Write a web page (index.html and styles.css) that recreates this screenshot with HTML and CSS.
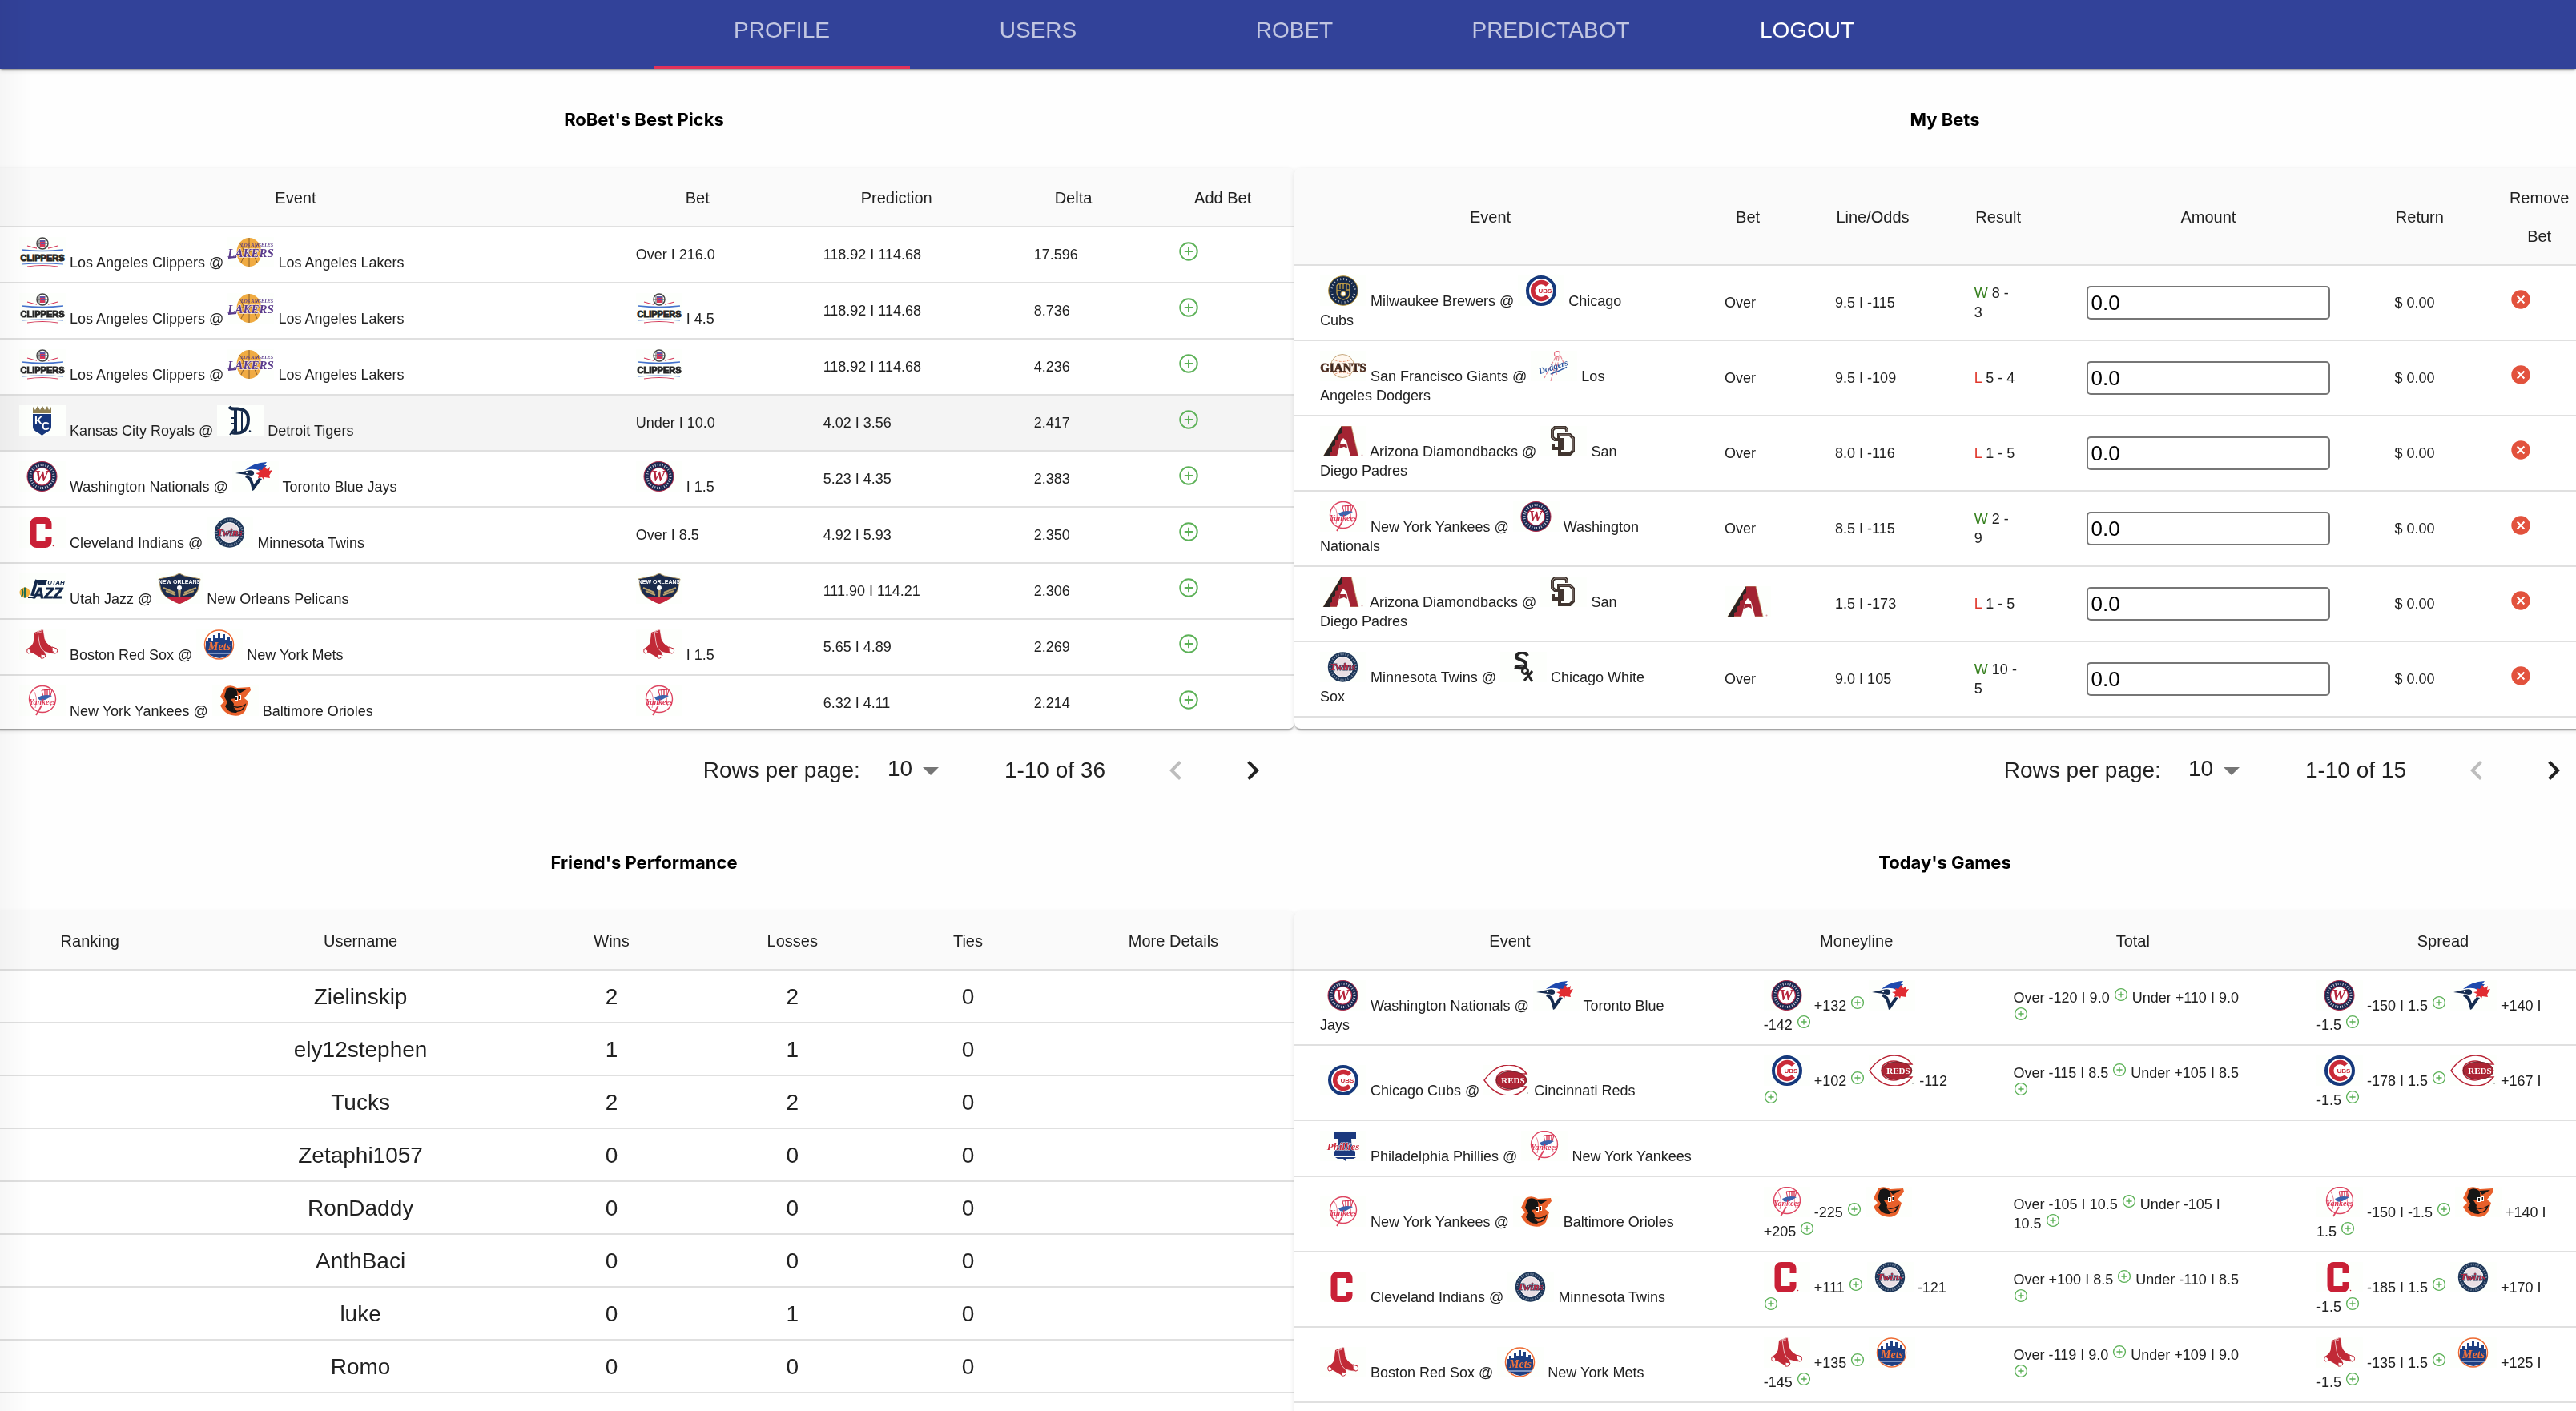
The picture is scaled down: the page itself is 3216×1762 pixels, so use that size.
FILE: index.html
```html
<!DOCTYPE html>
<html lang="en">
<head>
<meta charset="utf-8">
<meta name="viewport" content="width=device-width, initial-scale=1">
<title>RoBet</title>
<link rel="stylesheet" href="styles.css">
</head>
<body>
<svg class="sprite" aria-hidden="true">
  <symbol id="plus" viewBox="0 0 16 16"><circle cx="8" cy="8" r="6.6" fill="none" stroke="#5cb157" stroke-width="1.2"/><path d="M8 4.8v6.4M4.8 8h6.4" stroke="#5cb157" stroke-width="1.2"/></symbol>
  <symbol id="cross" viewBox="0 0 16 16"><circle cx="8" cy="8" r="7.2" fill="#e2523d"/><path d="M5.3 5.2l5.4 5.6M10.7 5.2l-5.4 5.6" stroke="#fff" stroke-width="1.3"/></symbol>
  <symbol id="prev" viewBox="0 0 24 24"><path d="M15.41 16.59L10.83 12l4.58-4.59L14 6l-6 6 6 6z"/></symbol>
  <symbol id="next" viewBox="0 0 24 24"><path d="M8.59 16.59L13.17 12 8.59 7.41 10 6l6 6-6 6z"/></symbol>
  <symbol id="caret" viewBox="0 0 24 24"><path d="M7 10l5 5 5-5z"/></symbol>

  <symbol id="clippers" viewBox="0 0 58 38">
    <circle cx="29" cy="8" r="7" fill="#fff" stroke="#444" stroke-width="1.5"/><path d="M22 8h14M25 2v12M33 2v12" stroke="#555" stroke-width="1"/><rect x="26" y="4" width="6" height="8" fill="#d5385a"/><path d="M26 5h6M27 8h5" stroke="#3a5fc0" stroke-width="1.5"/>
    <path d="M10 11q10 3 12 3M48 11q-10 3-12 3" stroke="#d5385a" stroke-width="1.3" fill="none"/><path d="M3 16q26 3 52 0" stroke="#4472cc" stroke-width="1.3" fill="none"/>
    <text x="29" y="30" class="mark narrow" font-size="11" fill="#262626" stroke="#262626" stroke-width="1" text-anchor="middle">CLIPPERS</text>
    <path d="M3 34q26-2 52 0" stroke="#4472cc" stroke-width="1.2" fill="none"/><path d="M10 37q19-3 38 0" stroke="#d5385a" stroke-width="1.2" fill="none"/>
  </symbol>
  <symbol id="lakers" viewBox="0 0 58 38">
    <ellipse cx="27" cy="19" rx="15.5" ry="18" fill="#f0ab42"/><path d="M27 1v36M15 7q10 12 2 25M39 7q-10 12-2 25M12 18h31" stroke="#6b4a28" stroke-width=".8" fill="none"/>
    <text x="37" y="12" class="mark serif" font-size="6" fill="#5a3b8c" text-anchor="middle">LOS ANGELES</text>
    <text x="29" y="25" class="mark serif" font-size="15" fill="#5a3b8c" stroke="#fff" stroke-width="1" paint-order="stroke" text-anchor="middle">LAKERS</text>
    <path d="M1 26l10-1" stroke="#5a3b8c" stroke-width="2"/>
  </symbol>
  <symbol id="royals" viewBox="0 0 58 38">
    <path d="M17 10V2l3 4 3-5 3 5 3-5 3 5 3-5 2 5 3-4v8z" fill="#8f8052"/><path d="M17 11h23v16c0 6-8 7-11.500 11C25 34 17 33 17 27z" fill="#17377c"/>
    <text x="24" y="24" class="mark upright" font-size="14" fill="#fff" text-anchor="middle">K</text><text x="33" y="31" class="mark upright" font-size="14" fill="#fff" text-anchor="middle">C</text>
  </symbol>
  <symbol id="tigers" viewBox="0 0 58 38">
    <g fill="none" stroke="#152a4a" stroke-width="4"><path d="M15 2c4 5 9 1 14 3q10 2 10 13t-7 15q-5 3-14 1"/><path d="M23 6v27" stroke-width="4"/><path d="M31 8v24" stroke-width="2"/><path d="M17 16h8M17 23h8M16 37l5-7M40 32l2 1" stroke-width="2"/></g>
  </symbol>
  <symbol id="nationals" viewBox="0 0 58 38">
    <circle cx="28.500" cy="19" r="18.500" fill="#1c2850" stroke="#ac2443" stroke-width="1"/><circle cx="28.500" cy="19" r="14.500" fill="none" stroke="#c9cddb" stroke-width="3" stroke-dasharray="1 2"/><circle cx="28.500" cy="19" r="11" fill="#fff" stroke="#ac2443" stroke-width="1.200"/>
    <text x="28" y="25" class="mark serif" font-size="19" fill="#b5243c" text-anchor="middle">W</text>
  </symbol>
  <symbol id="bluejays" viewBox="0 0 58 38">
    <path d="M5 15l17-3 12-3q6 3 8 9L25 37l-4-17z" fill="#fff"/><path d="M16 11Q26 2 43 1l-3 4h3l-3 4 3 1-9 2q-6-4-18-1z" fill="#1d49ad"/><path d="M4 15l14-3q8-2 9 2t-4 4l-5-1z" fill="#152c50"/><path d="M16 20q5 2 7 9l2 8 2-1 10-14-4-1-6 8-3-8-6-4z" fill="#152c50"/><circle cx="18" cy="14" r="1.200" fill="#fff"/>
    <path d="M40 6l3 4 4-3-1 5 4-1-4 7 1 3-7-1-1 3-2-3-5 1 1-4-4-2 5-1-1-4 4 1z" fill="#e12c31"/>
  </symbol>
  <symbol id="indians" viewBox="0 0 58 38">
    <rect x="17.500" y="4" width="19" height="30" rx="4" fill="none" stroke="#c92036" stroke-width="8"/><rect x="32" y="14" width="9" height="11" fill="#fdfffc"/><circle cx="42.500" cy="35.500" r=".8" fill="#c92036"/>
  </symbol>
  <symbol id="twins" viewBox="0 0 58 38">
    <circle cx="28.500" cy="19" r="18.700" fill="#1d3658"/><circle cx="28.500" cy="19" r="16" fill="none" stroke="#8494aa" stroke-width="2.500" stroke-dasharray="1 2"/><circle cx="28.500" cy="19" r="12.500" fill="#e9dfe4" stroke="#fff" stroke-width="1"/>
    <text x="28.500" y="23" class="mark serif" font-size="13" fill="#bf2943" stroke="#1d3658" stroke-width="1" paint-order="stroke" text-anchor="middle">Twins</text>
  </symbol>
  <symbol id="jazz" viewBox="0 0 58 38">
    <text x="46" y="14" class="mark sans" font-size="8" fill="#13284a" text-anchor="middle">UTAH</text><path d="M21 8h14l-2 6h-9z" fill="#13284a"/><path d="M22 8l-6 20" stroke="#13284a" stroke-width="4"/><circle cx="7" cy="24" r="6.500" fill="#f2b13c"/><path d="M7 17.500v13M3 19q3 5 0 10" stroke="#1f6e51" stroke-width="2" fill="none"/><path d="M11 30h8" stroke="#13284a" stroke-width="2"/>
    <text x="36" y="31" class="mark sans" font-size="19" fill="#13284a" stroke="#13284a" stroke-width=".8" text-anchor="middle">AZZ</text>
  </symbol>
  <symbol id="pelicans" viewBox="0 0 58 38">
    <path d="M3 7l20-4 6-3 6 3 20 4-3 14q-4 9-13 12l-10 5-10-5Q10 30 6 21z" fill="#1b2b4d" stroke="#b39a66" stroke-width="1"/><path d="M9 18l14 6M12 22l12 5M50 18l-15 6M47 22l-13 5" stroke="#b9a06c" stroke-width="2"/><path d="M14 30h30q-6 5-15 8-9-3-15-8z" fill="#c4243f"/>
    <text x="29" y="13" class="mark narrow" font-size="7" fill="#fff" text-anchor="middle">NEW ORLEANS</text><circle cx="29" cy="18" r="4" fill="#fff" stroke="#1b2b4d" stroke-width="2"/><path d="M27 21h4l-1 9h-2z" fill="#b9a06c"/>
  </symbol>
  <symbol id="redsox" viewBox="0 0 58 38">
    <path d="M19 4l10-4-1 14q-1 6 3 13l2 5-5 4-12-7-5-1q-3-4 1-5 6-4 6-10z" fill="#c12a37"/><path d="M23 3l7-3 2 12q2 6 8 9l7 3-1 6q-7 1-14-2-6-4-7-12z" fill="#c12a37" stroke="#fff" stroke-width=".7"/>
    <path d="M10 25q4-2 5 4l-4 1q-2-2-1-5zM27 31l6 1q-1 5-6 4zM41 22l6 2q2 6-3 6-4-3-3-8z" fill="#fff" stroke="#c12a37" stroke-width="1"/><path d="M20 5l8-2" stroke="#e9a3aa" stroke-width="1"/>
  </symbol>
  <symbol id="mets" viewBox="0 0 58 38">
    <circle cx="28.500" cy="19" r="18" fill="#fff" stroke="#ee6a32" stroke-width="1.500"/><path d="M12 20v-5h3v-4h3v3h3V7h3v4h3V4h3v7h3V6h3v7h3v-3h3v5h3v5q2 13-16 16Q9 32 12 20z" fill="#1f3f82"/><path d="M14 30h29" stroke="#9fb2d6" stroke-width="1.500"/>
    <text x="29" y="26" class="mark serif" font-size="14" fill="#f3733b" stroke="#1f3f82" stroke-width="1" paint-order="stroke" text-anchor="middle">Mets</text>
  </symbol>
  <symbol id="yankees" viewBox="0 0 58 38">
    <circle cx="29" cy="17" r="16.500" fill="#fff" stroke="#dd4561" stroke-width="1.400"/><path d="M17 5q7 9 3 23M41 6q-5 9-1 20" fill="none" stroke="#e88496" stroke-width="1"/><path d="M28 6l13-1-2 8-9 1z" fill="#fff" stroke="#d52d4c" stroke-width="1"/><path d="M32 5v8M35 5v8M38 5v8" stroke="#d52d4c" stroke-width="1.300"/><path d="M23 15q8-5 18-2l-5 3q-6 4-11 2z" fill="#3b63ae"/>
    <text x="29" y="24" class="mark serif" font-size="10" fill="#dd3453" text-anchor="middle">Yankees</text><path d="M28 25l-7 12" stroke="#dd4561" stroke-width="1.800"/>
  </symbol>
  <symbol id="orioles" viewBox="0 0 58 38">
    <path d="M16 2q7-4 15 1l16-1 1 4-8 10 5 4-4 12q-6 8-17 5-9-2-14-12l5-5-5-6z" fill="#e8602b"/><path d="M18 4q6-4 12 1 3 6 0 11l-7 1 4 6-1 5q2 4 7 3l-3 3q-9 1-14-8l3-5-4-7z" fill="#161616"/><path d="M30 5l14-1-10 6z" fill="#161616"/><path d="M28 13h4v6h-4zM33 12h3v6h-3z" fill="#fff"/><path d="M29 14h2v4h-2zM33.500 13h1.500v4h-1.500z" fill="#161616"/><path d="M24 25q8 5 17-1-3 9-11 8z" fill="#e8602b" stroke="#161616" stroke-width="1.400"/>
  </symbol>
  <symbol id="brewers" viewBox="0 0 58 38">
    <circle cx="29" cy="19" r="18.300" fill="#16294a" stroke="#b99537" stroke-width="1"/><circle cx="29" cy="19" r="14.500" fill="none" stroke="#c5cbd6" stroke-width="2.500" stroke-dasharray="1 3"/><path d="M21 22v-9q1-3 4-2 2-2 4 0 2-2 4 0 4-1 4 3v8q0 7-8 8-7-1-8-8zM25 11v6M29 11v6M33 11v6M21 19h5M32 18h5" fill="#16294a" stroke="#c6a146" stroke-width="1.300"/><circle cx="29" cy="23" r="3" fill="#fff" stroke="#c6a146"/>
  </symbol>
  <symbol id="cubs" viewBox="0 0 58 38">
    <circle cx="29" cy="19" r="17" fill="#fff" stroke="#16397c" stroke-width="4"/><path d="M37 12a10.500 10.500 0 1 0 0 14" fill="none" stroke="#ca2a38" stroke-width="5.500"/><text x="34" y="22" class="mark sans upright" font-size="8" fill="#ca2a38" text-anchor="middle" stroke="#fff" stroke-width="1" paint-order="stroke">UBS</text>
  </symbol>
  <symbol id="giants" viewBox="0 0 58 38">
    <circle cx="28" cy="19" r="14.500" fill="#fff8ef" stroke="#c5a57a" stroke-width="1"/><path d="M17 11q10 5 22 0M17 30q11-6 22 0" stroke="#e27b52" stroke-width="1" stroke-dasharray="1.500 1" fill="none"/>
    <text x="29" y="26" class="mark serif upright" font-size="15" fill="#332621" stroke="#5a3423" stroke-width=".8" text-anchor="middle">GIANTS</text>
  </symbol>
  <symbol id="dodgers" viewBox="0 0 58 38">
    <circle cx="33" cy="4" r="3.500" fill="#fff" stroke="#e57080" stroke-width="1.200"/><path d="M31 8L17 34M33 8l-8 30M35 8l-3 22M37 6l5 11" stroke="#e88a97" stroke-width="1.200" stroke-dasharray="5 1.500"/>
    <g transform="rotate(-18 27 20)"><text x="28" y="24" class="mark serif" font-size="11" fill="#2c55a0" text-anchor="middle">Dodgers</text><path d="M22 28q10 0 22-2" stroke="#2c55a0" stroke-width="1.500" fill="none"/></g>
  </symbol>
  <symbol id="dbacks" viewBox="0 0 58 38">
    <path d="M4 38L27 0h12l9 38z" fill="#a32433" stroke="#c6a878" stroke-width=".8"/><path d="M4 38L27 0v9l-4 2v6l-4 1v6l-4 2v6l-3 1v5z" fill="#2a2523"/><path d="M21 38l5-19 3-4 4 4 5 19z" fill="#fdfffc"/><path d="M25 22h8l1 6-4-2-6 2z" fill="#a32433"/><circle cx="52.500" cy="36.500" r="1" fill="#d59aa0"/>
  </symbol>
  <symbol id="padres" viewBox="0 0 58 38">
    <g fill="none" stroke="#41352f" stroke-width="4"><path d="M33 8V4l-2-2H18l-3 3v9l3 3h9v11H16v-6"/><path d="M24 18v17h13l4-4V15l-4-4H23v4"/></g><path d="M33 8V4l-2-2H18l-3 3v9l3 3M41 31V15l-4-4H23" fill="none" stroke="#a59b95" stroke-width=".8"/>
  </symbol>
  <symbol id="whitesox" viewBox="0 0 58 38">
    <g fill="none" stroke="#242424"><path d="M34 5q-2-5-9-4-6 2-4 7l9 4q5 5-1 8-5 1-11-1" stroke-width="4"/><path d="M18 19q6-3 12-2" stroke-width="2"/><circle cx="31" cy="24" r="3.500" stroke-width="3"/><path d="M32 25l8 12M40 24l-10 12" stroke-width="3"/></g>
  </symbol>
  <symbol id="phillies" viewBox="0 0 58 38">
    <path d="M17 1h28v9h-6q0 12 5 16v6H18v-6q6-5 5-16h-6z" fill="#1b397e"/><path d="M19 33h26l-3 2h-9l-1 3-3-3h-7z" fill="#1b397e"/><text x="29" y="24" class="mark serif" font-size="13" fill="#cb2d3d" stroke="#fff" stroke-width=".8" paint-order="stroke" text-anchor="middle">Phillies</text>
  </symbol>
  <symbol id="reds" viewBox="0 0 58 38">
    <path d="M1 19Q14 0 32 0q14 0 22 11H43q-9-6-18-3-9 3-9 11t9 11q9 3 18-3h11q-8 11-22 11Q14 38 1 19z" fill="#fff" stroke="#b92537" stroke-width="1.400"/><ellipse cx="35" cy="19" rx="19" ry="11" fill="#ad2434" stroke="#5d2229" stroke-width=".8"/>
    <text x="37" y="23" class="mark serif upright" font-size="11" fill="#fff" text-anchor="middle">REDS</text><circle cx="55" cy="35" r=".8" fill="#777"/>
  </symbol>
</svg>

<div class="app">
  <header class="appbar">
    <nav class="tabs">
      <a class="tab active" href="#profile">PROFILE</a>
      <a class="tab" href="#users">USERS</a>
      <a class="tab" href="#robet">ROBET</a>
      <a class="tab" href="#predictabot">PREDICTABOT</a>
      <a class="tab logout" href="#logout">LOGOUT</a>
    </nav>
  </header>

  <main class="dashboard">
    <section class="panel">
      <h2 class="title">RoBet's Best Picks</h2>
      <div class="paper">
        <table class="picks">
          <colgroup><col class="c-event"><col class="c-bet"><col class="c-pred"><col class="c-delta"><col class="c-add"></colgroup>
          <thead><tr><th>Event</th><th>Bet</th><th>Prediction</th><th>Delta</th><th>Add Bet</th></tr></thead>
          <tbody>
            <tr><td><svg class="logo"><use href="#clippers"/></svg> Los Angeles Clippers @ <svg class="logo"><use href="#lakers"/></svg> Los Angeles Lakers</td><td>Over I 216.0</td><td>118.92 I 114.68</td><td>17.596</td><td><button class="act" aria-label="Add bet"><svg><use href="#plus"/></svg></button></td></tr>
            <tr><td><svg class="logo"><use href="#clippers"/></svg> Los Angeles Clippers @ <svg class="logo"><use href="#lakers"/></svg> Los Angeles Lakers</td><td><svg class="logo"><use href="#clippers"/></svg> I 4.5</td><td>118.92 I 114.68</td><td>8.736</td><td><button class="act" aria-label="Add bet"><svg><use href="#plus"/></svg></button></td></tr>
            <tr><td><svg class="logo"><use href="#clippers"/></svg> Los Angeles Clippers @ <svg class="logo"><use href="#lakers"/></svg> Los Angeles Lakers</td><td><svg class="logo"><use href="#clippers"/></svg></td><td>118.92 I 114.68</td><td>4.236</td><td><button class="act" aria-label="Add bet"><svg><use href="#plus"/></svg></button></td></tr>
            <tr class="hovered"><td><svg class="logo"><use href="#royals"/></svg> Kansas City Royals @ <svg class="logo"><use href="#tigers"/></svg> Detroit Tigers</td><td>Under I 10.0</td><td>4.02 I 3.56</td><td>2.417</td><td><button class="act" aria-label="Add bet"><svg><use href="#plus"/></svg></button></td></tr>
            <tr><td><svg class="logo"><use href="#nationals"/></svg> Washington Nationals @ <svg class="logo"><use href="#bluejays"/></svg> Toronto Blue Jays</td><td><svg class="logo"><use href="#nationals"/></svg> I 1.5</td><td>5.23 I 4.35</td><td>2.383</td><td><button class="act" aria-label="Add bet"><svg><use href="#plus"/></svg></button></td></tr>
            <tr><td><svg class="logo"><use href="#indians"/></svg> Cleveland Indians @ <svg class="logo"><use href="#twins"/></svg> Minnesota Twins</td><td>Over I 8.5</td><td>4.92 I 5.93</td><td>2.350</td><td><button class="act" aria-label="Add bet"><svg><use href="#plus"/></svg></button></td></tr>
            <tr><td><svg class="logo"><use href="#jazz"/></svg> Utah Jazz @ <svg class="logo"><use href="#pelicans"/></svg> New Orleans Pelicans</td><td><svg class="logo"><use href="#pelicans"/></svg></td><td>111.90 I 114.21</td><td>2.306</td><td><button class="act" aria-label="Add bet"><svg><use href="#plus"/></svg></button></td></tr>
            <tr><td><svg class="logo"><use href="#redsox"/></svg> Boston Red Sox @ <svg class="logo"><use href="#mets"/></svg> New York Mets</td><td><svg class="logo"><use href="#redsox"/></svg> I 1.5</td><td>5.65 I 4.89</td><td>2.269</td><td><button class="act" aria-label="Add bet"><svg><use href="#plus"/></svg></button></td></tr>
            <tr><td><svg class="logo"><use href="#yankees"/></svg> New York Yankees @ <svg class="logo"><use href="#orioles"/></svg> Baltimore Orioles</td><td><svg class="logo"><use href="#yankees"/></svg></td><td>6.32 I 4.11</td><td>2.214</td><td><button class="act" aria-label="Add bet"><svg><use href="#plus"/></svg></button></td></tr>
          </tbody>
        </table>
      </div>
      <div class="pager">
        <label for="picks-rows">Rows per page:</label>
        <span class="rows"><select id="picks-rows"><option>10</option><option>25</option></select><svg><use href="#caret"/></svg></span>
        <span>1-10 of 36</span>
        <div class="pager-nav"><button class="step" aria-label="Previous page" disabled><svg><use href="#prev"/></svg></button><button class="step" aria-label="Next page"><svg><use href="#next"/></svg></button></div>
      </div>
    </section>

    <section class="panel">
      <h2 class="title">My Bets</h2>
      <div class="paper">
        <table class="bets">
          <colgroup><col class="c-event"><col class="c-bet"><col class="c-line"><col class="c-result"><col class="c-amount"><col class="c-return"><col class="c-remove"></colgroup>
          <thead><tr><th>Event</th><th>Bet</th><th>Line/Odds</th><th>Result</th><th>Amount</th><th>Return</th><th>Remove Bet</th></tr></thead>
          <tbody>
            <tr><td><svg class="logo"><use href="#brewers"/></svg> Milwaukee Brewers @ <svg class="logo"><use href="#cubs"/></svg> Chicago<br>Cubs</td><td>Over</td><td>9.5 I -115</td><td><span class="win">W</span> 8 -<br>3</td><td><input type="text" value="0.0" aria-label="Amount"></td><td>$ 0.00</td><td><button class="act" aria-label="Remove bet"><svg><use href="#cross"/></svg></button></td></tr>
            <tr><td><svg class="logo"><use href="#giants"/></svg> San Francisco Giants @ <svg class="logo"><use href="#dodgers"/></svg> Los<br>Angeles Dodgers</td><td>Over</td><td>9.5 I -109</td><td><span class="loss">L</span> 5 - 4</td><td><input type="text" value="0.0" aria-label="Amount"></td><td>$ 0.00</td><td><button class="act" aria-label="Remove bet"><svg><use href="#cross"/></svg></button></td></tr>
            <tr><td><svg class="logo"><use href="#dbacks"/></svg> Arizona Diamondbacks @ <svg class="logo"><use href="#padres"/></svg> San<br>Diego Padres</td><td>Over</td><td>8.0 I -116</td><td><span class="loss">L</span> 1 - 5</td><td><input type="text" value="0.0" aria-label="Amount"></td><td>$ 0.00</td><td><button class="act" aria-label="Remove bet"><svg><use href="#cross"/></svg></button></td></tr>
            <tr><td><svg class="logo"><use href="#yankees"/></svg> New York Yankees @ <svg class="logo"><use href="#nationals"/></svg> Washington<br>Nationals</td><td>Over</td><td>8.5 I -115</td><td><span class="win">W</span> 2 -<br>9</td><td><input type="text" value="0.0" aria-label="Amount"></td><td>$ 0.00</td><td><button class="act" aria-label="Remove bet"><svg><use href="#cross"/></svg></button></td></tr>
            <tr><td><svg class="logo"><use href="#dbacks"/></svg> Arizona Diamondbacks @ <svg class="logo"><use href="#padres"/></svg> San<br>Diego Padres</td><td><svg class="logo"><use href="#dbacks"/></svg></td><td>1.5 I -173</td><td><span class="loss">L</span> 1 - 5</td><td><input type="text" value="0.0" aria-label="Amount"></td><td>$ 0.00</td><td><button class="act" aria-label="Remove bet"><svg><use href="#cross"/></svg></button></td></tr>
            <tr><td><svg class="logo"><use href="#twins"/></svg> Minnesota Twins @ <svg class="logo"><use href="#whitesox"/></svg> Chicago White<br>Sox</td><td>Over</td><td>9.0 I 105</td><td><span class="win">W</span> 10 -<br>5</td><td><input type="text" value="0.0" aria-label="Amount"></td><td>$ 0.00</td><td><button class="act" aria-label="Remove bet"><svg><use href="#cross"/></svg></button></td></tr>
          </tbody>
        </table>
      </div>
      <div class="pager">
        <label for="bets-rows">Rows per page:</label>
        <span class="rows"><select id="bets-rows"><option>10</option><option>25</option></select><svg><use href="#caret"/></svg></span>
        <span>1-10 of 15</span>
        <div class="pager-nav"><button class="step" aria-label="Previous page" disabled><svg><use href="#prev"/></svg></button><button class="step" aria-label="Next page"><svg><use href="#next"/></svg></button></div>
      </div>
    </section>

    <section class="panel">
      <h2 class="title">Friend's Performance</h2>
      <div class="paper">
        <table class="friends">
          <colgroup><col class="c-rank"><col class="c-user"><col class="c-wins"><col class="c-losses"><col class="c-ties"><col class="c-more"></colgroup>
          <thead><tr><th>Ranking</th><th>Username</th><th>Wins</th><th>Losses</th><th>Ties</th><th>More Details</th></tr></thead>
          <tbody>
            <tr><td></td><td>Zielinskip</td><td>2</td><td>2</td><td>0</td><td></td></tr>
            <tr><td></td><td>ely12stephen</td><td>1</td><td>1</td><td>0</td><td></td></tr>
            <tr><td></td><td>Tucks</td><td>2</td><td>2</td><td>0</td><td></td></tr>
            <tr><td></td><td>Zetaphi1057</td><td>0</td><td>0</td><td>0</td><td></td></tr>
            <tr><td></td><td>RonDaddy</td><td>0</td><td>0</td><td>0</td><td></td></tr>
            <tr><td></td><td>AnthBaci</td><td>0</td><td>0</td><td>0</td><td></td></tr>
            <tr><td></td><td>luke</td><td>0</td><td>1</td><td>0</td><td></td></tr>
            <tr><td></td><td>Romo</td><td>0</td><td>0</td><td>0</td><td></td></tr>
          </tbody>
        </table>
      </div>
    </section>

    <section class="panel">
      <h2 class="title">Today's Games</h2>
      <div class="paper">
        <table class="games">
          <colgroup><col class="c-event"><col class="c-money"><col class="c-total"><col class="c-spread"></colgroup>
          <thead><tr><th>Event</th><th>Moneyline</th><th>Total</th><th>Spread</th></tr></thead>
          <tbody>
            <tr>
              <td><svg class="logo"><use href="#nationals"/></svg> Washington Nationals @ <svg class="logo"><use href="#bluejays"/></svg> Toronto Blue<br>Jays</td>
              <td><svg class="logo"><use href="#nationals"/></svg> +132 <button class="add" aria-label="Add"><svg><use href="#plus"/></svg></button> <svg class="logo"><use href="#bluejays"/></svg><br>-142 <button class="add" aria-label="Add"><svg><use href="#plus"/></svg></button></td>
              <td>Over -120 I 9.0 <button class="add" aria-label="Add"><svg><use href="#plus"/></svg></button> Under +110 I 9.0<br><button class="add" aria-label="Add"><svg><use href="#plus"/></svg></button></td>
              <td><svg class="logo"><use href="#nationals"/></svg> -150 I 1.5 <button class="add" aria-label="Add"><svg><use href="#plus"/></svg></button> <svg class="logo"><use href="#bluejays"/></svg> +140 I<br>-1.5 <button class="add" aria-label="Add"><svg><use href="#plus"/></svg></button></td>
            </tr>
            <tr>
              <td><svg class="logo"><use href="#cubs"/></svg> Chicago Cubs @ <svg class="logo"><use href="#reds"/></svg> Cincinnati Reds</td>
              <td><svg class="logo"><use href="#cubs"/></svg> +102 <button class="add" aria-label="Add"><svg><use href="#plus"/></svg></button> <svg class="logo"><use href="#reds"/></svg> -112<br><button class="add" aria-label="Add"><svg><use href="#plus"/></svg></button></td>
              <td>Over -115 I 8.5 <button class="add" aria-label="Add"><svg><use href="#plus"/></svg></button> Under +105 I 8.5<br><button class="add" aria-label="Add"><svg><use href="#plus"/></svg></button></td>
              <td><svg class="logo"><use href="#cubs"/></svg> -178 I 1.5 <button class="add" aria-label="Add"><svg><use href="#plus"/></svg></button> <svg class="logo"><use href="#reds"/></svg> +167 I<br>-1.5 <button class="add" aria-label="Add"><svg><use href="#plus"/></svg></button></td>
            </tr>
            <tr>
              <td><svg class="logo"><use href="#phillies"/></svg> Philadelphia Phillies @ <svg class="logo"><use href="#yankees"/></svg> New York Yankees</td>
              <td></td><td></td><td></td>
            </tr>
            <tr>
              <td><svg class="logo"><use href="#yankees"/></svg> New York Yankees @ <svg class="logo"><use href="#orioles"/></svg> Baltimore Orioles</td>
              <td><svg class="logo"><use href="#yankees"/></svg> -225 <button class="add" aria-label="Add"><svg><use href="#plus"/></svg></button> <svg class="logo"><use href="#orioles"/></svg><br>+205 <button class="add" aria-label="Add"><svg><use href="#plus"/></svg></button></td>
              <td>Over -105 I 10.5 <button class="add" aria-label="Add"><svg><use href="#plus"/></svg></button> Under -105 I<br>10.5 <button class="add" aria-label="Add"><svg><use href="#plus"/></svg></button></td>
              <td><svg class="logo"><use href="#yankees"/></svg> -150 I -1.5 <button class="add" aria-label="Add"><svg><use href="#plus"/></svg></button> <svg class="logo"><use href="#orioles"/></svg> +140 I<br>1.5 <button class="add" aria-label="Add"><svg><use href="#plus"/></svg></button></td>
            </tr>
            <tr>
              <td><svg class="logo"><use href="#indians"/></svg> Cleveland Indians @ <svg class="logo"><use href="#twins"/></svg> Minnesota Twins</td>
              <td><svg class="logo"><use href="#indians"/></svg> +111 <button class="add" aria-label="Add"><svg><use href="#plus"/></svg></button> <svg class="logo"><use href="#twins"/></svg> -121<br><button class="add" aria-label="Add"><svg><use href="#plus"/></svg></button></td>
              <td>Over +100 I 8.5 <button class="add" aria-label="Add"><svg><use href="#plus"/></svg></button> Under -110 I 8.5<br><button class="add" aria-label="Add"><svg><use href="#plus"/></svg></button></td>
              <td><svg class="logo"><use href="#indians"/></svg> -185 I 1.5 <button class="add" aria-label="Add"><svg><use href="#plus"/></svg></button> <svg class="logo"><use href="#twins"/></svg> +170 I<br>-1.5 <button class="add" aria-label="Add"><svg><use href="#plus"/></svg></button></td>
            </tr>
            <tr>
              <td><svg class="logo"><use href="#redsox"/></svg> Boston Red Sox @ <svg class="logo"><use href="#mets"/></svg> New York Mets</td>
              <td><svg class="logo"><use href="#redsox"/></svg> +135 <button class="add" aria-label="Add"><svg><use href="#plus"/></svg></button> <svg class="logo"><use href="#mets"/></svg><br>-145 <button class="add" aria-label="Add"><svg><use href="#plus"/></svg></button></td>
              <td>Over -119 I 9.0 <button class="add" aria-label="Add"><svg><use href="#plus"/></svg></button> Under +109 I 9.0<br><button class="add" aria-label="Add"><svg><use href="#plus"/></svg></button></td>
              <td><svg class="logo"><use href="#redsox"/></svg> -135 I 1.5 <button class="add" aria-label="Add"><svg><use href="#plus"/></svg></button> <svg class="logo"><use href="#mets"/></svg> +125 I<br>-1.5 <button class="add" aria-label="Add"><svg><use href="#plus"/></svg></button></td>
            </tr>
          </tbody>
        </table>
      </div>
    </section>
  </main>
</div>
</body>
</html>
```

FILE: styles.css
```css
:root {
  --primary: #324299;
  --accent: #e2325a;
  --text: #212121;
  --line: #e0e0e0;
  --raised: 0 4px 2px -2px rgba(0, 0, 0, 0.2), 0 2px 2px 0 rgba(0, 0, 0, 0.14), 0 2px 6px 0 rgba(0, 0, 0, 0.12);
}

*,
*::before,
*::after {
  box-sizing: border-box;
}

body {
  margin: 0;
  background: #fefefe;
  color: var(--text);
  font-family: "Liberation Sans", Helvetica, Arial, sans-serif;
  font-size: 18px;
  line-height: 24px;
}

button {
  padding: 0;
  border: 0;
  background: none;
  color: inherit;
  font: inherit;
  cursor: pointer;
}

.sprite {
  display: none;
}

.app {
  height: 100vh;
  overflow-x: hidden;
  overflow-y: auto;
  scrollbar-width: none;
}

.app::before {
  content: "";
  position: fixed;
  z-index: 3;
  inset: 0 auto 0 0;
  width: 40px;
  background: linear-gradient(to right, rgba(0, 0, 0, 0.03), rgba(0, 0, 0, 0));
  pointer-events: none;
}

/* Navigation */
.appbar {
  position: relative;
  z-index: 1;
  display: flex;
  justify-content: center;
  padding-left: 16px;
  background: var(--primary);
  box-shadow: var(--raised);
}

.tabs {
  display: flex;
}

.tab {
  width: 320px;
  padding: 18px 0 24px;
  border-bottom: 4px solid transparent;
  color: rgba(255, 255, 255, 0.7);
  font-size: 28px;
  line-height: 40px;
  text-align: center;
  text-decoration: none;
}

.tab.active {
  border-bottom-color: var(--accent);
}

.tab.logout {
  color: #fff;
}

/* Panels */
.dashboard {
  display: grid;
  grid-template-columns: 1fr 1fr;
  margin: 0 -24px 0 -8px;
}

.panel {
  min-width: 0;
}

.title {
  margin: 0;
  padding: 49px 0 47px;
  color: #000;
  font-family: Inter, sans-serif;
  font-size: 22px;
  font-weight: 700;
  line-height: 28px;
  text-align: center;
}

.paper {
  height: 700px;
  overflow: auto;
  scrollbar-width: none;
  border-radius: 8px;
  background: #fff;
  box-shadow: var(--raised);
}

/* Tables */
table {
  width: 100%;
  table-layout: fixed;
  border-collapse: separate;
  border-spacing: 0;
}

th,
td {
  padding: 12px 48px 12px 32px;
  border-bottom: 2px solid var(--line);
  vertical-align: middle;
}

th:last-child,
td:last-child {
  padding-right: 32px;
}

th {
  padding-top: 13px;
  padding-bottom: 11px;
  background: #fafafa;
  font-size: 20px;
  font-weight: 400;
  line-height: 48px;
  text-align: center;
}

.hovered td {
  background: #f4f4f4;
}

.games td {
  white-space: nowrap;
}

.friends td {
  height: 66px;
  padding-top: 13px;
  padding-bottom: 11px;
  font-size: 28px;
  line-height: 40px;
  text-align: center;
}

.picks .c-event { width: 47.4%; }
.picks .c-bet { width: 14.4%; }
.picks .c-pred { width: 16.2%; }
.picks .c-delta { width: 11%; }
.picks .c-add { width: 11%; }

.bets .c-event { width: 31.1%; }
.bets .c-bet { width: 8.5%; }
.bets .c-line { width: 10.7%; }
.bets .c-result { width: 8.6%; }
.bets .c-amount { width: 23.7%; }
.bets .c-return { width: 8.8%; }
.bets .c-remove { width: 8.6%; }

.friends .c-rank { width: 15.8%; }
.friends .c-user { width: 25.8%; }
.friends .c-wins { width: 12.8%; }
.friends .c-losses { width: 15%; }
.friends .c-ties { width: 12%; }
.friends .c-more { width: 18.6%; }

.games .c-event { width: 34.1%; }
.games .c-money { width: 19.2%; }
.games .c-total { width: 23.3%; }
.games .c-spread { width: 23.4%; }

.win { color: #37801f; }
.loss { color: #e0372b; }

/* Team logos */
.logo {
  width: 58px;
  height: 38px;
  background: #fdfffc;
  vertical-align: baseline;
}

.mark {
  font-family: "Liberation Sans", sans-serif;
  font-weight: 700;
  font-style: italic;
}

.mark.serif {
  font-family: "Liberation Serif", serif;
}

.mark.narrow {
  font-family: "Liberation Sans Narrow", "Liberation Sans", sans-serif;
  font-style: normal;
}

.mark.upright {
  font-style: normal;
}

/* Row actions */
.act {
  width: 26px;
  height: 26px;
  margin-left: 2px;
  vertical-align: 2px;
}

.add {
  width: 18px;
  height: 18px;
  margin-top: -1px;
  vertical-align: 1px;
}

.act svg,
.add svg {
  display: block;
  width: 100%;
  height: 100%;
}

input {
  display: block;
  width: 100%;
  height: 42px;
  padding: 2px 4px;
  border: 2px solid #767676;
  border-radius: 5px;
  background: #fff;
  color: #000;
  font-family: inherit;
  font-size: 26px;
}

/* Pagination */
.pager {
  display: flex;
  align-items: center;
  justify-content: flex-end;
  height: 104px;
  padding-right: 4px;
  font-size: 28px;
  line-height: 40px;
}

.rows {
  position: relative;
  display: flex;
  margin: 0 68px 0 16px;
}

.rows select {
  width: 96px;
  padding: 6px 46px 10px 18px;
  border: 0;
  appearance: none;
  background: none;
  color: inherit;
  font: inherit;
}

.rows svg {
  position: absolute;
  top: 4px;
  right: 0;
  width: 48px;
  height: 48px;
  fill: #757575;
  pointer-events: none;
}

.pager-nav {
  display: flex;
  margin-left: 40px;
}

.step {
  padding: 24px;
}

.step svg {
  display: block;
  width: 48px;
  height: 48px;
  fill: var(--text);
}

.step:disabled svg {
  fill: #bdbdbd;
}
```
